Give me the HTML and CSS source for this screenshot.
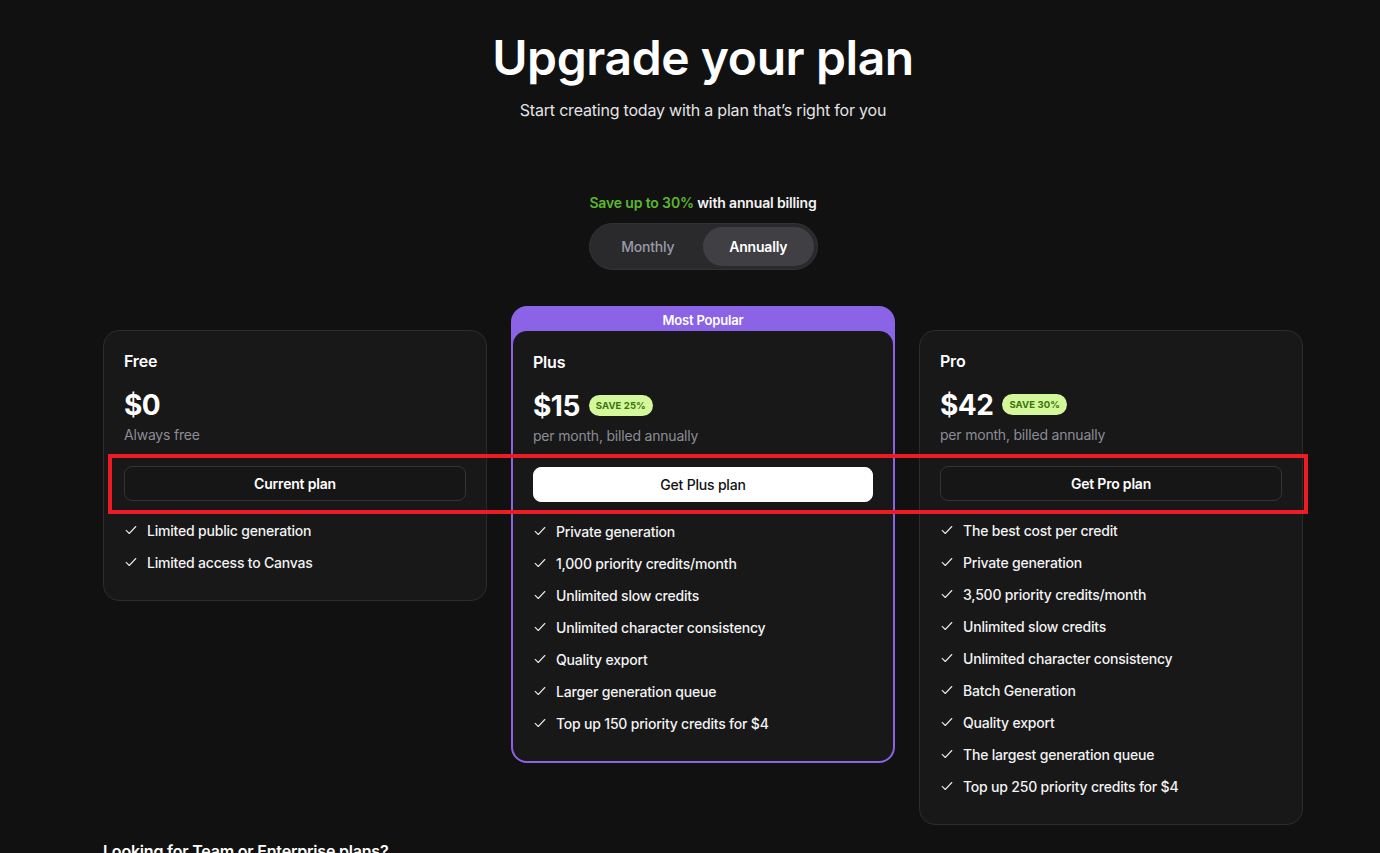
FILE: index.html
```html
<!DOCTYPE html>
<html lang="en">
<head>
<meta charset="utf-8">
<title>Upgrade your plan</title>
<link rel="stylesheet" href="styles.css">
</head>
<body>
<main class="page">
  <header class="hero">
    <h1 class="title">Upgrade your plan</h1>
    <p class="subtitle">Start creating today with a plan that’s right for you</p>
  </header>

  <section class="billing">
    <p class="save-note"><span class="save-green">Save up to 30%</span> with annual billing</p>
    <div class="toggle">
      <span class="toggle-opt">Monthly</span>
      <span class="toggle-opt active">Annually</span>
    </div>
  </section>

  <section class="plans">
    <article class="card">
      <h2 class="plan-name">Free</h2>
      <div class="price-row"><span class="price">$0</span></div>
      <p class="price-note">Always free</p>
      <button class="btn btn-dark">Current plan</button>
      <ul class="features">
        <li><svg class="check" viewBox="0 0 16 16"><path d="M2.5 8.5l3.5 3.5 7.5-8"/></svg>Limited public generation</li>
        <li><svg class="check" viewBox="0 0 16 16"><path d="M2.5 8.5l3.5 3.5 7.5-8"/></svg>Limited access to Canvas</li>
      </ul>
    </article>

    <article class="popular">
      <div class="popular-label">Most Popular</div>
      <div class="card card-inner">
        <h2 class="plan-name">Plus</h2>
        <div class="price-row"><span class="price">$15</span><span class="badge">SAVE 25%</span></div>
        <p class="price-note">per month, billed annually</p>
        <button class="btn btn-light">Get Plus plan</button>
        <ul class="features">
          <li><svg class="check" viewBox="0 0 16 16"><path d="M2.5 8.5l3.5 3.5 7.5-8"/></svg>Private generation</li>
          <li><svg class="check" viewBox="0 0 16 16"><path d="M2.5 8.5l3.5 3.5 7.5-8"/></svg>1,000 priority credits/month</li>
          <li><svg class="check" viewBox="0 0 16 16"><path d="M2.5 8.5l3.5 3.5 7.5-8"/></svg>Unlimited slow credits</li>
          <li><svg class="check" viewBox="0 0 16 16"><path d="M2.5 8.5l3.5 3.5 7.5-8"/></svg>Unlimited character consistency</li>
          <li><svg class="check" viewBox="0 0 16 16"><path d="M2.5 8.5l3.5 3.5 7.5-8"/></svg>Quality export</li>
          <li><svg class="check" viewBox="0 0 16 16"><path d="M2.5 8.5l3.5 3.5 7.5-8"/></svg>Larger generation queue</li>
          <li><svg class="check" viewBox="0 0 16 16"><path d="M2.5 8.5l3.5 3.5 7.5-8"/></svg>Top up 150 priority credits for $4</li>
        </ul>
      </div>
    </article>

    <article class="card">
      <h2 class="plan-name">Pro</h2>
      <div class="price-row"><span class="price">$42</span><span class="badge">SAVE 30%</span></div>
      <p class="price-note">per month, billed annually</p>
      <button class="btn btn-dark">Get Pro plan</button>
      <ul class="features">
        <li><svg class="check" viewBox="0 0 16 16"><path d="M2.5 8.5l3.5 3.5 7.5-8"/></svg>The best cost per credit</li>
        <li><svg class="check" viewBox="0 0 16 16"><path d="M2.5 8.5l3.5 3.5 7.5-8"/></svg>Private generation</li>
        <li><svg class="check" viewBox="0 0 16 16"><path d="M2.5 8.5l3.5 3.5 7.5-8"/></svg>3,500 priority credits/month</li>
        <li><svg class="check" viewBox="0 0 16 16"><path d="M2.5 8.5l3.5 3.5 7.5-8"/></svg>Unlimited slow credits</li>
        <li><svg class="check" viewBox="0 0 16 16"><path d="M2.5 8.5l3.5 3.5 7.5-8"/></svg>Unlimited character consistency</li>
        <li><svg class="check" viewBox="0 0 16 16"><path d="M2.5 8.5l3.5 3.5 7.5-8"/></svg>Batch Generation</li>
        <li><svg class="check" viewBox="0 0 16 16"><path d="M2.5 8.5l3.5 3.5 7.5-8"/></svg>Quality export</li>
        <li><svg class="check" viewBox="0 0 16 16"><path d="M2.5 8.5l3.5 3.5 7.5-8"/></svg>The largest generation queue</li>
        <li><svg class="check" viewBox="0 0 16 16"><path d="M2.5 8.5l3.5 3.5 7.5-8"/></svg>Top up 250 priority credits for $4</li>
      </ul>
    </article>

    <div class="highlight" aria-hidden="true"></div>
  </section>

  <h3 class="enterprise">Looking for Team or Enterprise plans?</h3>
</main>
</body>
</html>
```

FILE: styles.css
```css
* { box-sizing: border-box; }

html, body {
  margin: 0;
  padding: 0;
  background: #111111;
  color: #ffffff;
  font-family: Inter, "Noto Sans", "Liberation Sans", sans-serif;
  -webkit-font-smoothing: antialiased;
}

body { overflow: hidden; height: 853px; }

.page {
  width: 1200px;
  margin-left: 103px;
}

.hero {
  padding-top: 30px;
  text-align: center;
}

.title {
  margin: 0;
  font-size: 48px;
  line-height: 56px;
  font-weight: 600;
  letter-spacing: -0.4px;
}

.subtitle {
  margin: 12px 0 0;
  font-size: 16px;
  line-height: 24px;
  color: #e4e4e7;
  letter-spacing: -0.2px;
}

.billing {
  margin-top: 71px;
  display: flex;
  flex-direction: column;
  align-items: center;
}

.save-note {
  margin: 0;
  font-size: 14px;
  line-height: 20px;
  font-weight: 600;
  color: #f4f4f5;
  letter-spacing: -0.15px;
}

.save-green { color: #5cb82c; }

.toggle {
  margin-top: 10px;
  width: 229px;
  height: 47px;
  padding: 3px;
  border-radius: 24px;
  background: #2a2a2d;
  border: 1px solid #333336;
  display: flex;
}

.toggle-opt {
  flex: 1;
  display: flex;
  align-items: center;
  justify-content: center;
  border-radius: 21px;
  font-size: 14px;
  font-weight: 500;
  color: #9a9aa6;
  letter-spacing: -0.2px;
}

.toggle-opt.active {
  background: #404044;
  color: #ffffff;
  font-weight: 600;
}

.plans {
  position: relative;
  margin-top: 36px;
  display: flex;
  align-items: flex-start;
  gap: 24px;
}

.card {
  flex: 0 0 384px;
  margin-top: 24px;
  background: #181818;
  border: 1px solid #2c2c2e;
  border-radius: 16px;
  padding: 20px 20px 26px;
}

.popular {
  flex: 0 0 384px;
  background: #8a63e6;
  border: 2px solid #8a63e6;
  border-radius: 16px;
}

.popular-label {
  height: 23px;
  display: flex;
  align-items: center;
  justify-content: center;
  font-size: 13px;
  font-weight: 600;
  letter-spacing: -0.2px;
}

.card-inner {
  margin-top: 0;
  border: none;
  border-radius: 14px;
  padding: 21px 20px 26px;
}

.plan-name {
  margin: 0;
  font-size: 16px;
  line-height: 20px;
  font-weight: 600;
  letter-spacing: -0.2px;
}

.price-row {
  margin-top: 15px;
  height: 36px;
  display: flex;
  align-items: center;
  gap: 9px;
}

.price {
  font-size: 28px;
  line-height: 36px;
  font-weight: 700;
  letter-spacing: -0.5px;
  position: relative;
  top: 1px;
}

.badge {
  height: 21px;
  padding: 0 7px;
  border-radius: 11px;
  background: #d2f89a;
  color: #3f7012;
  font-size: 9.5px;
  font-weight: 700;
  display: flex;
  align-items: center;
  letter-spacing: 0.1px;
}

.price-note {
  margin: 3px 0 0;
  font-size: 14px;
  line-height: 20px;
  color: #8c8c96;
  letter-spacing: -0.2px;
}

.btn {
  display: block;
  width: 100%;
  height: 35px;
  margin-top: 21px;
  border-radius: 8px;
  font-family: inherit;
  font-size: 14px;
  font-weight: 600;
  letter-spacing: -0.2px;
  cursor: pointer;
}

.btn-dark {
  background: #161616;
  border: 1px solid #333336;
  color: #ffffff;
}

.btn-light {
  background: #ffffff;
  border: 1px solid #ffffff;
  color: #111111;
  font-weight: 500;
}

.features {
  list-style: none;
  margin: 17px 0 0;
  padding: 0;
  display: flex;
  flex-direction: column;
  gap: 8px;
}

.features li {
  display: flex;
  align-items: center;
  gap: 9px;
  height: 24px;
  font-size: 14px;
  font-weight: 500;
  color: #f2f2f3;
  letter-spacing: -0.2px;
}

.check {
  width: 14px;
  height: 14px;
  flex: 0 0 14px;
  fill: none;
  stroke: #e6e6e6;
  stroke-width: 1.3;
  stroke-linecap: round;
  stroke-linejoin: round;
}

.highlight {
  position: absolute;
  left: 5px;
  top: 148px;
  width: 1200px;
  height: 60px;
  border: 4px solid #ed1c24;
  pointer-events: none;
}

.enterprise {
  margin: 14px 0 0;
  font-size: 16px;
  line-height: 24px;
  font-weight: 600;
  letter-spacing: -0.2px;
}
```
